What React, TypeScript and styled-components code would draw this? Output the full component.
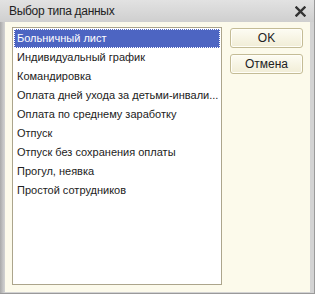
import React from "react";
import styled, { createGlobalStyle } from "styled-components";

const Global = createGlobalStyle`
  html, body { margin: 0; padding: 0; background: #ffffff; }
  body { font-family: "Liberation Sans", Arial, sans-serif; }
`;

const Window = styled.div`
  width: 315px;
  height: 294px;
  box-sizing: border-box;
  display: flex;
  flex-direction: column;
  background: linear-gradient(to right, #a9a9a9 0, #c4c4c4 3px, #d3d3d3 5px);
  border-right: 1px solid #9a9a9a;
  border-bottom: 1px solid #9a9a9a;
`;

const TitleBar = styled.div`
  height: 22px;
  flex: none;
  display: flex;
  align-items: center;
  justify-content: space-between;
  padding: 0 8px 0 9px;
  background: linear-gradient(#e2e2e2, #cfcfcf);
  font-family: "Liberation Sans", Arial, sans-serif;
  font-size: 12px;
  letter-spacing: -0.3px;
  color: #222;
`;

const CloseIcon = styled.svg`
  width: 11px;
  height: 11px;
  display: block;
`;

const Body = styled.div`
  flex: 1;
  margin: 0 4px 1px 5px;
  background: #fcfaeb;
  display: flex;
  gap: 8px;
  padding: 5px 7px 7px 7px;
`;

const List = styled.div`
  width: 210px;
  box-sizing: border-box;
  border: 1px solid #aca58c;
  background: #fff;
  padding: 1px;
  display: flex;
  flex-direction: column;
`;

const Item = styled.div<{ $selected?: boolean }>`
  height: 19px;
  line-height: 19px;
  box-sizing: border-box;
  padding-left: 3px;
  font-family: "Liberation Sans", Arial, sans-serif;
  font-size: 11px;
  white-space: nowrap;
  overflow: hidden;
  text-overflow: ellipsis;
  color: ${(p) => (p.$selected ? "#fff" : "#222")};
  background: ${(p) => (p.$selected ? "#4d65c2" : "transparent")};
  outline: ${(p) => (p.$selected ? "1px dotted #ffffff" : "none")};
  outline-offset: -1px;
`;

const Buttons = styled.div`
  width: 73px;
  display: flex;
  flex-direction: column;
  gap: 6px;
  padding-top: 1px;
`;

const Button = styled.div`
  height: 20px;
  box-sizing: border-box;
  border: 1px solid #c4bc96;
  border-radius: 3px;
  background: linear-gradient(#fdfcf3, #f1edd6);
  box-shadow: inset 0 0 0 1px #fffef8;
  display: flex;
  align-items: center;
  justify-content: center;
  font-family: "Liberation Sans", Arial, sans-serif;
  font-size: 12px;
  color: #222;
`;

const items = [
  "Больничный лист",
  "Индивидуальный график",
  "Командировка",
  "Оплата дней ухода за детьми-инвали...",
  "Оплата по среднему заработку",
  "Отпуск",
  "Отпуск без сохранения оплаты",
  "Прогул, неявка",
  "Простой сотрудников",
];

export default function App() {
  return (
    <>
      <Global />
      <Window>
        <TitleBar>
          <span>Выбор типа данных</span>
          <CloseIcon viewBox="0 0 11 11">
            <path d="M1.5 1.5 L9.5 9.5 M9.5 1.5 L1.5 9.5" stroke="#333" strokeWidth="2.4" strokeLinecap="square" />
          </CloseIcon>
        </TitleBar>
        <Body>
          <List>
            {items.map((t, i) => (
              <Item key={t} $selected={i === 0}>
                {t}
              </Item>
            ))}
          </List>
          <Buttons>
            <Button>OK</Button>
            <Button>Отмена</Button>
          </Buttons>
        </Body>
      </Window>
    </>
  );
}
